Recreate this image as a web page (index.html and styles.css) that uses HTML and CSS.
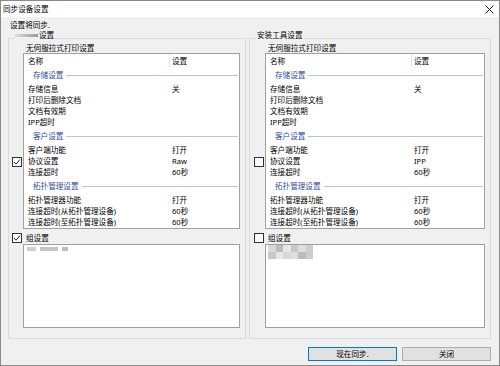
FILE: index.html
```html
<!DOCTYPE html>
<html lang="zh-CN">
<head>
    <meta charset="UTF-8">
    <title>同步设备设置</title>
    <link rel="stylesheet" href="styles.css">
</head>
<body>
    <div class="window">
        <div class="titlebar">
            <span class="title">同步设备设置</span>
            <span class="close">
                <svg width="9" height="9" viewBox="0 0 9 9"><path d="M0.5 0.5 L8.5 8.5 M8.5 0.5 L0.5 8.5" stroke="#222" stroke-width="1" fill="none"/></svg>
            </span>
        </div>

        <div class="dialog-body">
            <div class="intro">设置将同步.</div>

            <div class="groups">
                <!-- device side -->
                <div class="group group-left">
                    <div class="group-title"><span class="blur-title"></span>设置</div>
                    <div class="group-grid">
                        <div></div>
                        <div class="sub-title">无伺服拉式打印设置</div>

                        <div class="list-check"><span class="checkbox checked"><svg width="8" height="8" viewBox="0 0 8 8"><path d="M1 4 L3 6.2 L7 1.5" stroke="#222" stroke-width="1" fill="none"/></svg></span></div>
                        <div class="listbox">
                            <div class="list-head"><div class="col-name">名称</div><div class="col-value">设置</div></div>
                            <div class="section">存储设置</div>
                            <div class="row"><div class="col-name">存储信息</div><div class="col-value">关</div></div>
                            <div class="row"><div class="col-name">打印后删除文档</div><div class="col-value"></div></div>
                            <div class="row"><div class="col-name">文档有效期</div><div class="col-value"></div></div>
                            <div class="row"><div class="col-name">IPP超时</div><div class="col-value"></div></div>
                            <div class="section">客户设置</div>
                            <div class="row"><div class="col-name">客户端功能</div><div class="col-value">打开</div></div>
                            <div class="row"><div class="col-name">协议设置</div><div class="col-value">Raw</div></div>
                            <div class="row"><div class="col-name">连接超时</div><div class="col-value">60秒</div></div>
                            <div class="section">拓扑管理设置</div>
                            <div class="row"><div class="col-name">拓扑管理器功能</div><div class="col-value">打开</div></div>
                            <div class="row"><div class="col-name">连接超时(从拓扑管理设备)</div><div class="col-value">60秒</div></div>
                            <div class="row"><div class="col-name">连接超时(至拓扑管理设备)</div><div class="col-value">60秒</div></div>
                        </div>

                        <div class="group-check"><span class="checkbox checked"><svg width="8" height="8" viewBox="0 0 8 8"><path d="M1 4 L3 6.2 L7 1.5" stroke="#222" stroke-width="1" fill="none"/></svg></span></div>
                        <div class="group-label">组设置</div>

                        <div></div>
                        <div class="listbox group-list">
                            <div class="blur-line">
                                <span class="blur-a"></span><span class="blur-b"></span><span class="blur-c"></span>
                            </div>
                        </div>
                    </div>
                </div>

                <!-- install tool side -->
                <div class="group group-right">
                    <div class="group-title">安装工具设置</div>
                    <div class="group-grid">
                        <div></div>
                        <div class="sub-title">无伺服拉式打印设置</div>

                        <div class="list-check"><span class="checkbox"></span></div>
                        <div class="listbox">
                            <div class="list-head"><div class="col-name">名称</div><div class="col-value">设置</div></div>
                            <div class="section">存储设置</div>
                            <div class="row"><div class="col-name">存储信息</div><div class="col-value">关</div></div>
                            <div class="row"><div class="col-name">打印后删除文档</div><div class="col-value"></div></div>
                            <div class="row"><div class="col-name">文档有效期</div><div class="col-value"></div></div>
                            <div class="row"><div class="col-name">IPP超时</div><div class="col-value"></div></div>
                            <div class="section">客户设置</div>
                            <div class="row"><div class="col-name">客户端功能</div><div class="col-value">打开</div></div>
                            <div class="row"><div class="col-name">协议设置</div><div class="col-value">IPP</div></div>
                            <div class="row"><div class="col-name">连接超时</div><div class="col-value">60秒</div></div>
                            <div class="section">拓扑管理设置</div>
                            <div class="row"><div class="col-name">拓扑管理器功能</div><div class="col-value">打开</div></div>
                            <div class="row"><div class="col-name">连接超时(从拓扑管理设备)</div><div class="col-value">60秒</div></div>
                            <div class="row"><div class="col-name">连接超时(至拓扑管理设备)</div><div class="col-value">60秒</div></div>
                        </div>

                        <div class="group-check"><span class="checkbox"></span></div>
                        <div class="group-label">组设置</div>

                        <div></div>
                        <div class="listbox group-list group-list-right">
                            <div class="blur-blob">
                                <span class="b1"></span><span class="b2"></span><span class="b3"></span><span class="b4"></span><span class="b5"></span><span class="b6"></span>
                                <span class="b4"></span><span class="b3"></span><span class="b1"></span><span class="b5"></span><span class="b2"></span><span class="b6"></span>
                            </div>
                        </div>
                    </div>
                </div>
            </div>
        </div>

        <div class="buttons">
            <button class="btn btn-default">现在同步.</button>
            <button class="btn">关闭</button>
        </div>
    </div>
</body>
</html>
```

FILE: styles.css
```css
body {
    margin: 0;
    font-family: "Noto Sans", "Noto Sans CJK SC", sans-serif;
    font-size: 7.6px;
    color: #000000;
}

.window {
    width: 500px;
    height: 366px;
    box-sizing: border-box;
    border: 1px solid #8a8a8a;
    background-color: #f0f0f0;
    display: flex;
    flex-direction: column;
}

.titlebar {
    height: 16px;
    background-color: #ffffff;
    display: flex;
    align-items: center;
    justify-content: space-between;
    padding: 0 5px 0 2px;
}

.title {
    line-height: 14px;
}

.close svg {
    display: block;
}

.dialog-body {
    padding: 3px 8px 0 7px;
}

.intro {
    line-height: 10px;
    padding-left: 2px;
}

.groups {
    display: flex;
    gap: 3px;
    margin-top: 8px;
}

.group {
    box-sizing: border-box;
    border: 1px solid #dcdcdc;
    padding: 0 5px 10px 3px;
}

.group-left {
    width: 238px;
}

.group-right {
    width: 242px;
    padding-left: 4px;
}

.group-title {
    width: fit-content;
    margin: -9px 0 0 2px;
    padding: 0 1px;
    line-height: 10px;
    background-color: #f0f0f0;
    display: flex;
    align-items: center;
}

.blur-title {
    display: inline-block;
    width: 23px;
    height: 3px;
    margin-right: 1px;
    background: linear-gradient(to right, #dcdcdc, #9a9a9a);
}

.group-grid {
    display: grid;
    grid-template-columns: 11px 1fr;
}

.sub-title {
    margin-top: 3px;
    line-height: 10px;
    padding-left: 3px;
}

.list-check {
    margin-top: 104px;
}

.group-check {
    margin-top: 4px;
}

.group-label {
    margin-top: 4px;
    line-height: 11px;
    padding-left: 3px;
}

.checkbox {
    display: flex;
    align-items: center;
    justify-content: center;
    width: 10px;
    height: 10px;
    box-sizing: border-box;
    border: 1px solid #333333;
    background-color: #ffffff;
}

.checkbox svg {
    display: block;
}

.listbox {
    background-color: #ffffff;
    border: 1px solid #a0a0a0;
}

.list-head {
    display: flex;
    height: 13px;
}

.list-head .col-name {
    border-right: 1px solid #e5e5e5;
    padding-top: 2px;
    line-height: 11px;
}

.list-head .col-value {
    padding-top: 2px;
    line-height: 11px;
}

.col-name {
    width: 146px;
    box-sizing: border-box;
    padding-left: 4px;
    white-space: nowrap;
}

.col-value {
    padding-left: 2px;
}

.row {
    display: flex;
    height: 11px;
    line-height: 11px;
}

.section {
    display: flex;
    align-items: center;
    height: 17px;
    line-height: 11px;
    padding-left: 9px;
    color: #2f4c9c;
}

.section::after {
    content: "";
    flex: 1;
    height: 1px;
    margin: 0 1px 0 3px;
    background-color: #b5c6e3;
}

.group-list {
    height: 84px;
    box-sizing: border-box;
    padding: 2px 3px;
}

.blur-line {
    display: flex;
    gap: 4px;
    align-items: center;
    height: 4px;
}

.blur-line span {
    height: 4px;
    background-color: #cfcfcf;
}

.blur-a {
    width: 9px;
}

.blur-b {
    width: 18px;
    background-color: #c4c4c4 !important;
}

.blur-c {
    width: 6px;
    background-color: #bdbdbd !important;
}

.group-list-right {
    padding: 0 2px;
}

.blur-blob {
    display: grid;
    grid-template-columns: repeat(6, 7.5px);
    grid-auto-rows: 7px;
}

.b1 { background-color: #d8d8d8; }
.b2 { background-color: #bcbcbc; }
.b3 { background-color: #e6e6e6; }
.b4 { background-color: #c8c8c8; }
.b5 { background-color: #dedede; }
.b6 { background-color: #cdcdcd; }

.buttons {
    display: flex;
    justify-content: flex-end;
    gap: 5px;
    padding: 8px 8px 0 0;
}

.btn {
    width: 89px;
    height: 14px;
    box-sizing: border-box;
    border: 1px solid #adadad;
    background-color: #e1e1e1;
    font: inherit;
    color: #000000;
    line-height: 12px;
    padding: 0;
}

.btn-default {
    border-color: #0078d7;
}
```
